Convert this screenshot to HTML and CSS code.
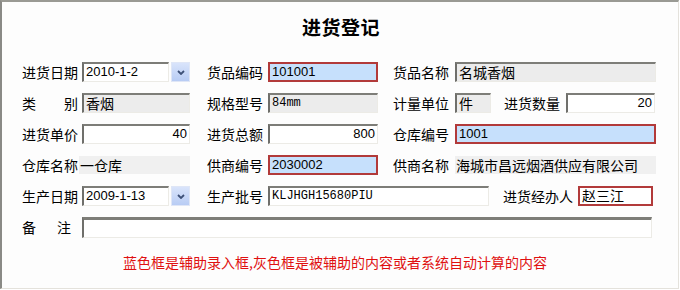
FILE: index.html
```html
<!DOCTYPE html>
<html lang="zh">
<head>
<meta charset="utf-8">
<title>进货登记</title>
<link rel="stylesheet" href="styles.css">
</head>
<body>
<div class="frame">
  <div class="title">进货登记</div>
  <div class="form">
    <div class="row">
      <span class="lbl">进货日期</span>
      <span class="box sunk date num">2010-1-2</span>
      <span class="drop"><svg width="8" height="5" viewBox="0 0 8 5"><path d="M1 1 L4 4 L7 1" fill="none" stroke="#3d5077" stroke-width="1.8"/></svg></span>
      <span class="lbl l2">货品编码</span>
      <span class="box key f2 num">101001</span>
      <span class="lbl l3">货品名称</span>
      <span class="box sunk ro f3">名城香烟</span>
    </div>
    <div class="row">
      <span class="lbl"><span class="sp29">类</span>别</span>
      <span class="box sunk ro f1">香烟</span>
      <span class="lbl l2">规格型号</span>
      <span class="box sunk ro f2 mono">84mm</span>
      <span class="lbl l3">计量单位</span>
      <span class="box sunk ro unit">件</span>
      <span class="lbl l4">进货数量</span>
      <span class="box sunk qty num right">20</span>
    </div>
    <div class="row">
      <span class="lbl">进货单价</span>
      <span class="box sunk f1 num right">40</span>
      <span class="lbl l2">进货总额</span>
      <span class="box sunk f2 num right">800</span>
      <span class="lbl l3">仓库编号</span>
      <span class="box key f3 num">1001</span>
    </div>
    <div class="row">
      <span class="lbl">仓库名称</span>
      <span class="flat wh">一仓库</span>
      <span class="lbl l2">供商编号</span>
      <span class="box key f2 num">2030002</span>
      <span class="lbl l3">供商名称</span>
      <span class="flat sup">海城市昌远烟酒供应有限公司</span>
    </div>
    <div class="row">
      <span class="lbl">生产日期</span>
      <span class="box sunk date num">2009-1-13</span>
      <span class="drop"><svg width="8" height="5" viewBox="0 0 8 5"><path d="M1 1 L4 4 L7 1" fill="none" stroke="#3d5077" stroke-width="1.8"/></svg></span>
      <span class="lbl l2">生产批号</span>
      <span class="box sunk batch mono">KLJHGH15680PIU</span>
      <span class="lbl l5">进货经办人</span>
      <span class="box key white agent">赵三江</span>
    </div>
    <div class="row">
      <span class="lbl"><span class="sp22">备</span>注</span>
      <span class="box sunk memo"></span>
    </div>
  </div>
  <div class="note">蓝色框是辅助录入框,灰色框是被辅助的内容或者系统自动计算的内容</div>
</div>
</body>
</html>
```
FILE: styles.css
```css
html, body {
  margin: 0;
  padding: 0;
  background: #ffffff;
}
body {
  font-family: "Noto Sans CJK SC", "Liberation Sans", sans-serif;
  font-size: 14px;
  color: #000;
}
.frame {
  box-sizing: border-box;
  width: 679px;
  height: 289px;
  border-style: solid;
  border-width: 2px 1px 1px 2px;
  border-color: #9a9a94 #e4e2dc #e4e2dc #8a8a86;
  background: #fdfdfd;
  padding: 13px 0 0 20px;
}
.title {
  height: 24px;
  line-height: 24px;
  text-align: center;
  font-size: 19px;
  font-weight: 700;
  padding-right: 18px;
  letter-spacing: 0.5px;
}
.form {
  display: flex;
  flex-direction: column;
  gap: 11px;
  margin-top: 23px;
}
.row {
  display: flex;
  align-items: center;
  height: 20px;
}
.lbl {
  width: 56px;
  flex: none;
  line-height: 20px;
  white-space: nowrap;
}
.sp29 { margin-right: 28px; }
.sp22 { margin-right: 21px; }
.l2 { margin-left: 17px; }
.l3 { margin-left: 15px; }
.l4 { margin-left: 13px; }
.l5 { margin-left: 14px; width: 70px; }
.box {
  box-sizing: border-box;
  height: 20px;
  line-height: 16px;
  flex: none;
  padding: 0 2px;
  white-space: nowrap;
  overflow: hidden;
}
.row > .box, .row > .flat { margin-left: 4px; }
.row > .l2 + .box { margin-left: 5px; }
.row > .l3 + .box, .row > .l3 + .flat, .row > .l4 + .box { margin-left: 6px; }
.row > .l5 + .box { margin-left: 5px; }
.sunk {
  border-style: solid;
  border-width: 2px 1px 1px 2px;
  border-color: #7d7d78 #ecebe6 #ecebe6 #6f6f6b;
  background: #ffffff;
}
.ro { background: #ececec; }
.key {
  border: 2px solid #b23a3a;
  background: #c6e0fc;
  line-height: 16px;
}
.key.white { background: #ffffff; }
.flat {
  box-sizing: border-box;
  height: 18px;
  line-height: 18px;
  background: #f0f0f0;
  flex: none;
  padding: 0 1px;
  white-space: nowrap;
}
.wh { width: 111px; margin-left: 1px !important; }
.sup { width: 201px; }
.num {
  font-family: "Liberation Sans", sans-serif;
  font-size: 13px;
}
.mono {
  font-family: "Liberation Mono", monospace;
  font-size: 12px;
}
.right { text-align: right; padding-right: 2px; }
.f1 { width: 108px; }
.f2 { width: 110px; }
.f3 { width: 201px; }
.date { width: 87px; }
.unit { width: 36px; }
.qty { width: 89px; }
.batch { width: 221px; }
.agent { width: 75px; line-height: 15px; }
.memo { width: 570px; height: 21px; border-top-width: 3px; }
.drop {
  box-sizing: border-box;
  flex: none;
  width: 19px;
  height: 20px;
  margin-left: 2px;
  border: 1px solid #dfe6f6;
  background: linear-gradient(#d9e4fb, #b8ccf4);
  display: flex;
  align-items: center;
  justify-content: center;
}
.drop svg { display: block; }
.note {
  margin-top: 15px;
  margin-left: 101px;
  line-height: 20px;
  color: #e01010;
  font-size: 14px;
}
```
